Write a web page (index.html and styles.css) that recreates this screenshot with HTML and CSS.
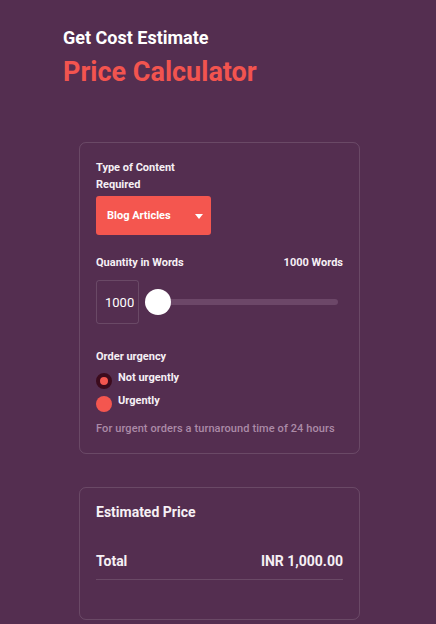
FILE: index.html
```html
<!DOCTYPE html>
<html lang="en">
<head>
<meta charset="utf-8">
<title>Price Calculator</title>
<link rel="stylesheet" href="styles.css">
</head>
<body>
<main class="page">
  <header class="intro">
    <h2 class="eyebrow">Get Cost Estimate</h2>
    <h1 class="title">Price Calculator</h1>
  </header>

  <section class="card form-card">
    <label class="label type-label">Type of Content Required</label>
    <div class="select">
      <span>Blog Articles</span>
      <svg class="caret" width="8" height="5" viewBox="0 0 8 5"><path d="M0 0H8L4 5Z" fill="#fff"/></svg>
    </div>

    <div class="row qty-head">
      <span class="label">Quantity in Words</span>
      <span class="label">1000 Words</span>
    </div>
    <div class="row qty">
      <div class="num"><span>1000</span></div>
      <div class="slider">
        <div class="track"></div>
        <div class="thumb"></div>
      </div>
    </div>

    <div class="label urgency-label">Order urgency</div>
    <div class="radios">
      <div class="radio-row"><span class="radio checked"></span><span class="label">Not urgently</span></div>
      <div class="radio-row"><span class="radio"></span><span class="label">Urgently</span></div>
    </div>
    <p class="note">For urgent orders a turnaround time of 24 hours</p>
  </section>

  <section class="card result-card">
    <h3 class="result-title">Estimated Price</h3>
    <div class="row total">
      <span>Total</span>
      <span>INR 1,000.00</span>
    </div>
  </section>
</main>
</body>
</html>
```

FILE: styles.css
```css
* { box-sizing: border-box; }
html, body {
  margin: 0;
  padding: 0;
  background: #542e50;
  font-family: Roboto, "Liberation Sans", sans-serif;
  color: #f6f0f5;
}
.page {
  padding: 27px 0 0 63px;
  height: 624px;
  overflow: hidden;
}
.intro { margin: 0; }
.eyebrow {
  margin: 0;
  font-size: 18px;
  line-height: 22px;
  font-weight: 700;
  color: #ffffff;
}
.title {
  margin: 7px 0 0;
  font-size: 27px;
  line-height: 32px;
  font-weight: 700;
  color: #f2544f;
}
.card {
  width: 281px;
  margin-left: 16px;
  border: 1px solid rgba(255,255,255,0.13);
  border-radius: 7px;
  padding: 16px;
}
.form-card { margin-top: 54px; }
.label {
  font-size: 11px;
  line-height: 17px;
  font-weight: 700;
  color: #f6f0f5;
}
.type-label { display: block; width: 100px; }
.select {
  margin-top: 3px;
  width: 115px;
  height: 39px;
  background: #f4564f;
  border-radius: 3px;
  display: flex;
  align-items: center;
  justify-content: space-between;
  padding: 0 8px 0 11px;
  font-size: 11px;
  font-weight: 700;
  color: #fff;
}
.caret { margin-top: 1px; }
.row {
  display: flex;
  justify-content: space-between;
  align-items: center;
}
.qty-head { margin-top: 19px; }
.qty { margin-top: 9px; justify-content: flex-start; gap: 6px; }
.num {
  width: 43px;
  height: 44px;
  border: 1px solid rgba(255,255,255,0.13);
  border-radius: 3px;
  display: flex;
  align-items: center;
  padding: 0 3px 0 8px;
  overflow: hidden;
  font-size: 13px;
  color: #fff;
  white-space: nowrap;
}
.num span { display: block; overflow: hidden; }
.slider {
  position: relative;
  width: 193px;
  height: 26px;
  display: flex;
  align-items: center;
}
.track {
  width: 100%;
  height: 6px;
  border-radius: 3px;
  background: #6c4768;
}
.thumb {
  position: absolute;
  left: 0;
  top: 0;
  width: 26px;
  height: 26px;
  border-radius: 50%;
  background: #ffffff;
}
.urgency-label { margin-top: 24px; }
.radios {
  display: flex;
  flex-direction: column;
  gap: 7px;
  margin-top: 8px;
}
.radio-row {
  display: flex;
  align-items: flex-start;
  gap: 6px;
}
.radio {
  width: 16px;
  height: 16px;
  border-radius: 50%;
  background: #f4564f;
  flex: none;
}
.radio.checked {
  background: #f4564f;
  border: 4px solid #3c0b1d;
}
.radio-row .label { margin-top: -4px; }
.note {
  margin: 8px 0 0;
  font-size: 11px;
  line-height: 17px;
  font-weight: 500;
  letter-spacing: 0.1px;
  color: #ab8aa7;
}
.result-card {
  margin-top: 33px;
  padding-bottom: 39px;
}
.result-title {
  margin: 0;
  font-size: 14px;
  line-height: 16px;
  font-weight: 700;
  color: #f6f0f5;
}
.total {
  margin-top: 33px;
  font-size: 14px;
  line-height: 16px;
  font-weight: 700;
  padding-bottom: 10px;
  border-bottom: 1px solid rgba(255,255,255,0.13);
}
```
